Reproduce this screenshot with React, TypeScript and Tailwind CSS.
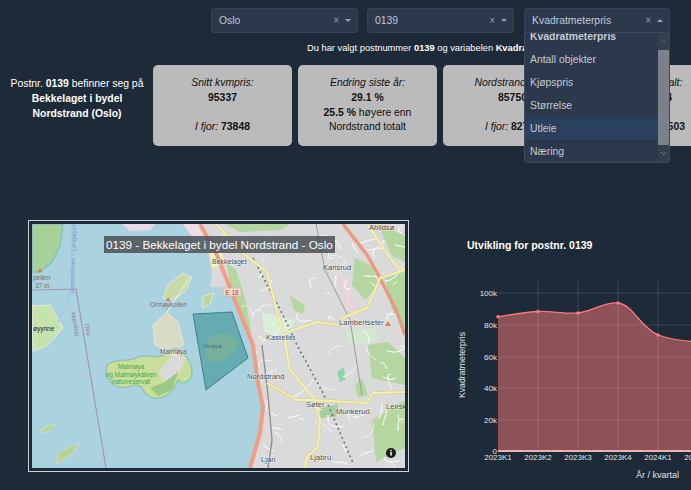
import { ChevronDown, ChevronUp } from "lucide-react";

const options = ["Antall objekter", "Kjøpspris", "Størrelse", "Utleie", "Næring"];

function Select({ value, open, className }: { value: string; open?: boolean; className: string }) {
  return (
    <div className={`flex h-[25px] items-center rounded-[3px] border border-[#354257] bg-[#2c394d] pl-[7px] pr-[6px] text-[10.4px] text-[#c3c9d2] ${className}`}>
      <span className="flex-1">{value}</span>
      <span className="mr-[6px] text-[10px] leading-none text-[#9aa2ae]">×</span>
      <span className={`h-0 w-0 border-x-[3px] border-x-transparent ${open ? "border-b-[3px] border-b-[#9aa2ae]" : "border-t-[3px] border-t-[#9aa2ae]"}`} />
    </div>
  );
}

function Dropdown() {
  return (
    <div className="absolute left-[524px] top-[32px] z-10 flex h-[131px] w-[146px] overflow-hidden rounded-b-[3px] border border-[#3d4a5e] bg-[#2c394d] text-[10.4px] text-[#c3c9d2]">
      <div className="flex-1 overflow-hidden">
        <div className="mt-[-8px] flex h-[23px] items-center px-[5px] pt-[1px] font-bold">Kvadratmeterpris</div>
        {options.map((o) => (
          <div key={o} className={`flex h-[23px] items-center px-[5px] ${o === "Utleie" ? "bg-[#2a405c]" : ""}`}>
            {o}
          </div>
        ))}
      </div>
      <div className="flex w-[11px] flex-col bg-[#333f4f]">
        <ChevronUp size={9} className="mx-auto my-[4px] text-[#6d7683]" />
        <div className="flex-1 bg-[#7b808a]" />
        <ChevronDown size={9} className="mx-auto my-[4px] text-[#8a919c]" />
      </div>
    </div>
  );
}

function Card({ children }: { children: React.ReactNode }) {
  return (
    <div className="flex h-[81px] w-[139px] shrink-0 flex-col items-center justify-center rounded-[5px] bg-[#bbbbbb] text-center text-[10.4px] leading-[14.6px] text-[#111]">
      {children}
    </div>
  );
}

// småveier i byggesonen, spredt med en enkel fast tallrekke
function streets() {
  const out: string[] = [];
  let s = 17;
  const next = (n: number) => {
    s = (s * 137 + 59) % 1009;
    return s % n;
  };
  for (let i = 0; i < 150; i++) {
    const x = 215 + next(190);
    const y = 226 + next(242);
    const dx = next(36) - 18;
    const dy = next(36) - 18;
    out.push(`M${x} ${y} q${dx} ${next(12) - 6} ${dx + next(10)} ${dy}`);
  }
  return out;
}

const land = "M183 224 L195 238 L208 252 L212 272 L210 287 L228 288 L240 315 L252 340 L258 383 L263 407 L260 433 L250 468 L405 468 L405 224 Z";

function MapArt() {
  return (
    <svg viewBox="32 224 373 244" className="h-[244px] w-[373px]" fontFamily="'Liberation Sans', Arial, sans-serif">
      <defs>
        <clipPath id="land">
          <path d={land} />
        </clipPath>
      </defs>
      <rect x="32" y="224" width="373" height="244" fill="#aad3df" />
      {/* fastlandet */}
      <path d={land} fill="#dadada" />
      <path d="M122 224 L155 224 L150 230 L130 231 Z" fill="#e8dbe6" />
      <path d="M183 224 L204 224 L204 242 L193 238 Z" fill="#efdde6" />
      {/* grønne felt */}
      <g fill="#b4d69f">
        <path d="M355 258 L372 266 L378 285 L365 300 L352 285 Z" />
        <path d="M385 278 L405 272 L405 328 L392 310 Z" />
        <path d="M378 224 L405 236 L405 262 L392 256 Z" />
        <path d="M290 296 L305 305 L303 314 L294 310 Z" />
        <path d="M368 345 L388 342 L405 358 L405 385 L372 378 Z" />
        <path d="M372 420 L405 400 L405 448 L376 462 Z" />
        <path d="M226 262 L236 270 L246 302 L252 336 L240 315 L231 288 Z" />
        <path d="M225 224 L290 224 L280 230 L240 232 Z" />
        <path d="M355 385 L362 378 L368 395 L358 398 Z" />
      </g>
      <path d="M262 312 L295 320 L287 338 L264 332 Z" fill="#dbeed9" />
      <path d="M320 408 L338 404 L336 417 L320 418 Z" fill="#a9cfa0" />
      <path d="M338 272 L346 280 L358 322 L350 310 Z" fill="#f1d3d6" />
      <path d="M337 372 L344 367 L345 380 L340 382 Z" fill="#8fd3a9" />
      <path d="M210 252 L222 250 L224 264 L212 268 Z" fill="#f7f3bd" />
      <path d="M345 330 L375 328 L380 340 L350 345 Z" fill="#cfe8cf" />
      {/* små veier */}
      <g clipPath="url(#land)" fill="none" stroke="#f7f7f7" strokeWidth="0.8">
        {streets().map((d) => (
          <path key={d} d={d} />
        ))}
      </g>
      {/* øyer */}
      <path d="M32 224 L63 224 L60 246 L52 262 L40 272 L32 272 Z" fill="#a8d19a" stroke="#8bc7b8" strokeWidth="2" />
      <path d="M32 306 L50 305 L63 328 L48 345 L33 351 Z" fill="#c4e3ad" stroke="#e8e8d8" />
      <path d="M183 273 L192 277 L185 292 L172 300 L163 298 L168 285 Z" fill="#c9d9a8" stroke="#e5e5da" />
      <path d="M167 312 L178 322 L184 345 L170 352 L155 345 L153 325 Z" fill="#d8dcc5" stroke="#e5e5da" />
      <path d="M167 312 L190 277" stroke="#f3f3f3" strokeWidth="1" />
      <path d="M203 296 L214 293 L210 304 L203 308 Z" fill="#bcd69a" stroke="#dbe8d6" />
      <path d="M106 368 C108 358 128 362 136 358 C146 352 158 362 168 352 C178 342 190 358 192 370 C193 382 182 386 178 380 C172 400 150 405 142 388 C136 380 125 392 116 386 C108 382 106 376 106 368 Z" fill="#c9de99" stroke="#8fc7b4" strokeWidth="1.5" />
      <path d="M158 372 L176 350 L186 358 L180 372 L165 382 Z" fill="#dadada" />
      <path d="M150 388 L165 382 L178 372 L172 390 L158 396 Z" fill="#98c985" />
      <path d="M41 430 L48 426 L56 424 L50 431 L43 433 Z" fill="#b7d394" stroke="#e8e8d8" strokeWidth="0.5" />
      <path d="M56 463 L59 452 L79 443 L74 452 L60 462 Z" fill="#b7d394" stroke="#e8e8d8" strokeWidth="0.5" />
      {/* kommunegrense */}
      <path d="M32 290 L76 289 L106 468" fill="none" stroke="#a691b3" strokeWidth="1.2" />
      <path d="M72 224 L72 289 L56 328" fill="none" stroke="#9db7ea" strokeWidth="1" strokeDasharray="4 3" />
      {/* hovedveier */}
      <path d="M200 224 L217 255 L230 288 L253 345 L258 383 L263 407 L260 433 L250 468" fill="none" stroke="#f09d84" strokeWidth="4" />
      <path d="M343 224 L367 255 L380 278 L397 312 L405 335" fill="none" stroke="#ea9a80" strokeWidth="3.5" />
      <path d="M316 224 L325 270 L350 320 L362 395" fill="none" stroke="#9a9a9a" strokeWidth="1" />
      <path d="M253 258 L283 315 L297 345 L323 393 L353 463" fill="none" stroke="#6f6f6f" strokeWidth="1.6" strokeDasharray="2 3" />
      <path d="M262 345 L268 395 L272 440 L268 468" fill="none" stroke="#8f8f8f" strokeWidth="1.4" />
      <g fill="none" stroke="#cfc98f" strokeWidth="2.8">
        <path d="M217 225 L243 253 L267 272 L278 315 L285 340 L290 370 L313 397 L320 420 L318 447 L307 457 L305 468" />
        <path d="M267 383 L297 400 L313 400 L367 403 L373 393 L405 392" />
        <path d="M287 332 L317 322 L340 325 L342 318 L367 308 L380 278 L405 270" />
        <path d="M367 224 L395 265 L405 270" />
      </g>
      <g fill="none" stroke="#f6f2ab" strokeWidth="2">
        <path d="M217 225 L243 253 L267 272 L278 315 L285 340 L290 370 L313 397 L320 420 L318 447 L307 457 L305 468" />
        <path d="M267 383 L297 400 L313 400 L367 403 L373 393 L405 392" />
        <path d="M287 332 L317 322 L340 325 L342 318 L367 308 L380 278 L405 270" />
        <path d="M367 224 L395 265 L405 270" />
      </g>
      {/* flate for postnummeret */}
      <path d="M205 345 C210 332 232 330 238 342 C236 358 215 368 207 358 Z" fill="#cfe0b0" />
      <path d="M193 314 L232 312 L248 358 L206 390 Z" fill="#2f8a8c" fillOpacity="0.55" stroke="#2f6f78" strokeWidth="0.8" />
      {/* skilt */}
      <rect x="223" y="288" width="18" height="8" rx="1.5" fill="#f6d9cb" stroke="#e3a48f" strokeWidth="0.6" />
      <text x="232" y="294.5" textAnchor="middle" fontSize="6.5" fill="#a8493a">E 18</text>
      {/* stedsnavn */}
      <g fontSize="7.6" fill="#4a4a4a" stroke="#fff" strokeOpacity="0.55" strokeWidth="1.2" paintOrder="stroke">
        <text x="212" y="264" fontSize="7">Bekkelaget</text>
        <text x="323" y="270">Karlsrud</text>
        <text x="339" y="325">Lambertseter</text>
        <text x="266" y="340">Kastellet</text>
        <text x="247" y="379">Nordstrand</text>
        <text x="306" y="407">Søter</text>
        <text x="336" y="414">Munkerud</text>
        <text x="386" y="409">Leirsk</text>
        <text x="261" y="462">Ljan</text>
        <text x="310" y="460">Ljabru</text>
        <text x="369" y="230">Abildsø</text>
        <text x="160" y="354" fontSize="6.5">Malmøya</text>
      </g>
      <g fontSize="6.5" fill="#8b6a5a">
        <text x="150" y="307">Ormøykollen</text>
        <text x="33" y="280">pellen</text>
        <text x="35" y="288">37 m</text>
      </g>
      <g fontSize="6.5" fill="#3fa651" textAnchor="middle">
        <text x="131" y="369">Malmøya</text>
        <text x="131" y="377">og Malmøykalven</text>
        <text x="131" y="384">naturreservat</text>
      </g>
      <text x="203" y="348" fontSize="6" fill="#3f6f6f">Ulvøya</text>
      <text x="33" y="331" fontSize="6.5" fill="#222">øyynne</text>
      <text x="74" y="293" fontSize="6.5" fill="#7d97d8" transform="rotate(-88 74 293)">Drøsholmen - Langøyene</text>
      <text x="71" y="312" fontSize="6" fill="#8a7a95" transform="rotate(80 71 312)">Akershus</text>
      <text x="85" y="324" fontSize="6" fill="#8a7a95" transform="rotate(80 85 324)">Oslo</text>
      <polygon points="168,297 170.5,301 165.5,301" fill="#d9814f" />
      <polygon points="40,268 42.5,272 37.5,272" fill="#d9814f" />
      <polygon points="388,321 391,326 385,326" fill="#d9814f" />
      {/* info */}
      <circle cx="391" cy="453" r="5" fill="#1c1c1c" />
      <rect x="390.3" y="452" width="1.5" height="3.6" fill="#fff" />
      <rect x="390.3" y="449.8" width="1.5" height="1.4" fill="#fff" />
    </svg>
  );
}

function Chart() {
  const line =
    "M498 316.7 C511 315 525 312 538 311.5 C551 311 565 314 578 313 C591 312 603 302 618 303 C632 304 640 327 658 335 C670 339 685 341.5 698 341.5";
  const yTicks: [string, number][] = [["100k", 293], ["80k", 325], ["60k", 357], ["40k", 388], ["20k", 420], ["0", 451]];
  const xTicks: [string, number][] = [["2023K1", 498], ["2023K2", 538], ["2023K3", 578], ["2023K4", 618], ["2024K1", 658], ["2024K2", 698]];
  const points: [number, number][] = [[498, 316.7], [538, 311.5], [578, 313], [618, 303], [658, 335]];
  return (
    <svg viewBox="440 260 251 230" className="h-[230px] w-[251px]" fontFamily="'Liberation Sans', Arial, sans-serif">
      <path d={`${line} L698 451 L498 451 Z`} fill="#8c5257" />
      {yTicks.slice(0, 5).map(([t, y]) => (
        <line key={t} x1="498" x2="691" y1={y} y2={y} stroke="#fff" strokeOpacity="0.13" />
      ))}
      {xTicks.slice(1).map(([t, x]) => (
        <line key={t} x1={x} x2={x} y1="282" y2="451" stroke="#fff" strokeOpacity="0.13" />
      ))}
      <path d={line} fill="none" stroke="#f77b7f" strokeWidth="1.3" />
      {points.map(([x, y]) => (
        <circle key={x} cx={x} cy={y} r="1.8" fill="#f77b7f" />
      ))}
      <line x1="498" x2="691" y1="451" y2="451" stroke="#e9b3b3" strokeWidth="2" />
      {yTicks.map(([t, y]) => (
        <text key={t} x="497" y={y + 2.8} textAnchor="end" fontSize="8" fill="#e2e4e8">{t}</text>
      ))}
      {xTicks.map(([t, x]) => (
        <text key={t} x={x} y="459.5" textAnchor="middle" fontSize="8" fill="#e2e4e8">{t}</text>
      ))}
      <text x="636" y="477.5" fontSize="9" fill="#e2e4e8">År / kvartal</text>
      <text x="465" y="365" textAnchor="middle" fontSize="8.7" fill="#e2e4e8" transform="rotate(-90 465 365)">Kvadratmeterpris</text>
    </svg>
  );
}

export default function App() {
  return (
    <div className="relative h-[490px] w-[691px] overflow-hidden bg-[#1d2a38] font-['Liberation_Sans',Arial,sans-serif]">
      <div className="flex pl-[211px] pt-[8px]">
        <Select value="Oslo" className="w-[147px]" />
        <Select value="0139" className="ml-[9px] w-[147px]" />
        <Select value="Kvadratmeterpris" open className="ml-[10px] w-[146px]" />
      </div>
      <Dropdown />
      <p className="mt-[8px] whitespace-nowrap pl-[307px] text-[9.3px] leading-[14px] text-white">
        Du har valgt postnummer <b>0139</b> og variabelen <b>Kvadratmeterpris</b>
      </p>
      <div className="mt-[10px] flex">
        <div className="w-[153px] shrink-0 pl-[1px] pt-[11px] text-center text-[10.4px] leading-[15px] text-white">
          Postnr. <b>0139</b> befinner seg på
          <br />
          <b>Bekkelaget i bydel</b>
          <br />
          <b>Nordstrand (Oslo)</b>
        </div>
        <div className="flex gap-[6px]">
          <Card>
            <i>Snitt kvmpris:</i>
            <b>95337</b>
            <br />
            <span><i>I fjor:</i> <b>73848</b></span>
          </Card>
          <Card>
            <i>Endring siste år:</i>
            <b>29.1 %</b>
            <span><b>25.5 %</b> høyere enn</span>
            <span>Nordstrand totalt</span>
          </Card>
          <Card>
            <i>Nordstrand snitt:</i>
            <b>85750</b>
            <br />
            <span><i>I fjor:</i> <b>82750</b></span>
          </Card>
          <Card>
            <i>Oslo totalt:</i>
            <b>81824</b>
            <br />
            <span><i>I fjor:</i> <b>81503</b></span>
          </Card>
        </div>
      </div>
      <div className="mt-[74px] flex items-start">
        <div className="relative ml-[28px] h-[252px] w-[381px] shrink-0 border border-[#cfd3d8] p-[3px]">
          <MapArt />
          <div className="absolute left-[75px] top-[15px] h-[17px] whitespace-nowrap bg-[#4a5056]/85 px-[2px] text-[11.7px] leading-[17px] text-white">
            0139 - Bekkelaget i bydel Nordstrand - Oslo
          </div>
        </div>
        <div className="ml-[31px] shrink-0">
          <div className="relative pl-[27px] pt-[18px] text-[10.5px] font-bold leading-[14px] text-white">Utvikling for postnr. 0139</div>
        </div>
      </div>
      <div className="absolute left-[440px] top-[260px]">
        <Chart />
      </div>
    </div>
  );
}
